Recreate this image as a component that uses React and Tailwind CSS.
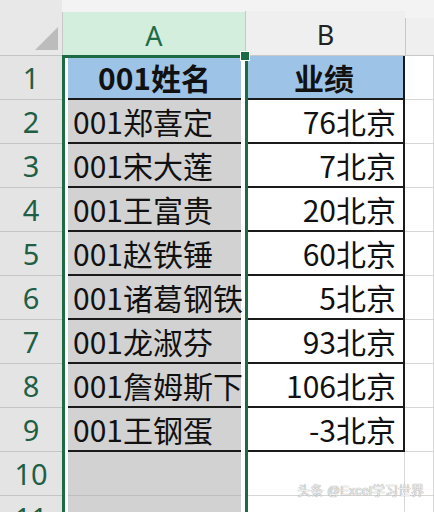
import React from 'react';

const rows = [
  ['001郑喜定', '76北京'],
  ['001宋大莲', '7北京'],
  ['001王富贵', '20北京'],
  ['001赵铁锤', '60北京'],
  ['001诸葛钢铁', '5北京'],
  ['001龙淑芬', '93北京'],
  ['001詹姆斯下', '106北京'],
  ['001王钢蛋', '-3北京'],
];

const cjk = { fontFamily: '"Noto Sans CJK SC", "Noto Sans", sans-serif' };
const num = { fontFamily: '"Noto Sans", "Liberation Sans", sans-serif' };
const mark = { fontFamily: '"Liberation Sans", "Noto Sans CJK SC", sans-serif' };

const RowHead = ({ n }) => (
  <div
    className="w-[62px] h-[44px] shrink-0 bg-[#e4e4e4] border-b border-[#c4c4c4] flex items-center justify-center text-[29px] text-[#215e45]"
    style={num}
  >
    {n}
  </div>
);

const App = () => {
  return (
    <div className="relative w-[434px] h-[512px] overflow-hidden bg-white" style={cjk}>
      {/* column headers */}
      <div className="flex h-[56px] bg-[#f3f3f3]">
        <div className="relative w-[62px] shrink-0 bg-[#e8e8e8] border-b border-[#c4c4c4]">
          <svg className="absolute left-0 top-0" width="62" height="56">
            <polygon points="35,50 58,27 58,50" fill="#bcbcbc" />
          </svg>
        </div>
        <div className="flex flex-col w-[183px] shrink-0">
          <div className="h-[18px] bg-[#f3f3f3]" />
          <div
            className="flex-1 bg-[#d3eedd] border-l border-[#c8c8c8] flex items-center justify-center pt-[4px] text-[27px] text-[#1e6b48]"
            style={num}
          >
            A
          </div>
        </div>
        <div className="flex flex-col w-[160px] shrink-0">
          <div className="h-[18px] bg-[#f3f3f3]" />
          <div
            className="flex-1 bg-[#efefef] border-l border-b border-[#c8c8c8] flex items-center justify-center pt-[4px] text-[27px] text-[#222]"
            style={num}
          >
            B
          </div>
        </div>
        <div className="flex flex-col flex-1">
          <div className="h-[18px] bg-[#f3f3f3]" />
          <div className="flex-1 bg-[#efefef] border-l border-b border-[#c8c8c8]" />
        </div>
      </div>

      {/* header row */}
      <div className="flex h-[44px]">
        <RowHead n={1} />
        <div className="w-[183px] shrink-0 bg-white pl-[6px] pr-[4px]">
          <div className="h-full bg-[#9dc3e6] border-b-2 border-[#1a1a1a] flex items-center justify-center text-[30px] font-bold text-[#111]">
            001姓名
          </div>
        </div>
        <div className="w-[160px] shrink-0 bg-[#9dc3e6] border-b-2 border-r-2 border-[#1a1a1a] flex items-center justify-center text-[30px] font-bold text-[#111]">
          业绩
        </div>
        <div className="flex-1 border-b border-[#d6d6d6] border-r" />
      </div>

      {rows.map(([name, val], i) => (
        <div key={i} className="flex h-[44px]">
          <RowHead n={i + 2} />
          <div className="w-[183px] shrink-0 bg-white pl-[6px] pr-[4px] overflow-hidden">
            <div className="h-full bg-[#d2d2d2] border-b-2 border-[#1a1a1a] flex items-center pl-[5px] text-[30px] text-[#111] whitespace-nowrap">
              {name}
            </div>
          </div>
          <div className="w-[160px] shrink-0 bg-white border-b-2 border-r-2 border-[#1a1a1a] flex items-center justify-end pr-[7px] text-[30px] text-[#111] whitespace-nowrap">
            {val}
          </div>
          <div className="flex-1 border-b border-r border-[#d6d6d6]" />
        </div>
      ))}

      {[10, 11].map((n) => (
        <div key={n} className="flex h-[44px]">
          <RowHead n={n} />
          <div className="w-[183px] shrink-0 bg-white pl-[6px] pr-[4px]">
            <div className="h-full bg-[#d2d2d2] border-b border-[#bdbdbd]" />
          </div>
          <div className="w-[160px] shrink-0 bg-white border-b border-r border-[#d6d6d6]" />
          <div className="flex-1 border-b border-r border-[#d6d6d6]" />
        </div>
      ))}

      {/* selection outline on column A */}
      <div className="absolute left-[62px] top-[55px] w-[186px] h-[470px] border-[3px] border-[#1d6b44]" />
      <div className="absolute left-[241px] top-[52px] w-[8px] h-[8px] bg-[#1d6b44] outline outline-1 outline-white" />

      {/* watermark */}
      <div
        className="absolute right-[10px] bottom-[12px] text-[13px] text-[#ececec] [text-shadow:0_0_1px_#666]"
        style={mark}
      >
        头条 @Excel学习世界
      </div>
    </div>
  );
};

export default App;
